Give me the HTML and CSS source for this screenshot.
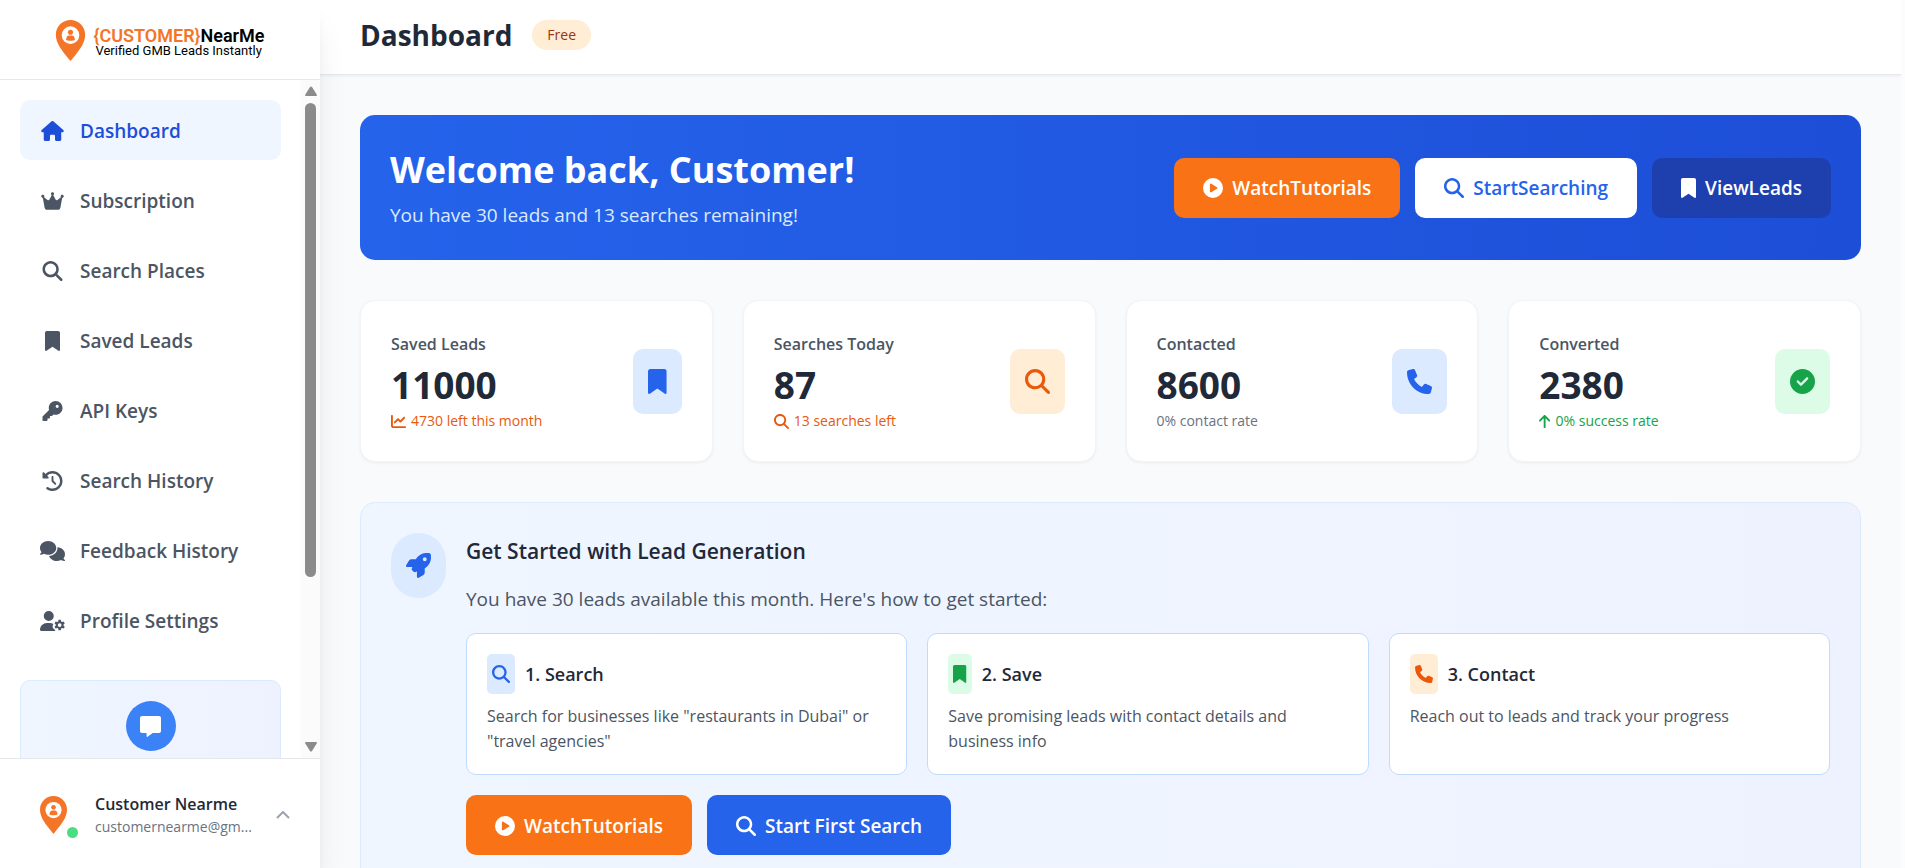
FILE: index.html
```html
<!DOCTYPE html>
<html lang="en">
<head>
    <meta charset="UTF-8">
    <meta name="viewport" content="width=device-width, initial-scale=1.0">
    <title>CustomerNearMe - Dashboard</title>
    <link rel="stylesheet" href="styles.css">
</head>
<body>
    <svg class="sprite" aria-hidden="true">
        <symbol id="i-house" viewBox="0 0 576 512"><path d="M575.8 255.500c0 18-15 32.100-32 32.100h-32l.7 160.200c0 2.700-.2 5.400-.5 8.100V472c0 22.100-17.900 40-40 40H392c-22.100 0-40-17.900-40-40v-88c0-17.700-14.300-32-32-32h-64c-17.700 0-32 14.300-32 32v88c0 22.100-17.900 40-40 40h-80c-22.100 0-40-17.900-40-40V287.600H32c-18 0-32-14-32-32.100 0-9 3-17 10-24L266.400 8c7-7 15-8 22-8s15 2 21 7l255.400 224.500c8 7 12 15 11 24z"/></symbol>
        <symbol id="i-crown" viewBox="0 0 576 512"><path d="M309 106c11.400-7 19-19.700 19-34 0-22.100-17.900-40-40-40s-40 17.900-40 40c0 14.400 7.600 27 19 34l-57.300 114.600c-9.100 18.200-32.700 23.400-48.600 10.700L72 160c5-6.700 8-15 8-24 0-22.100-17.900-40-40-40S0 113.900 0 136s17.900 40 40 40h.7l45.700 251.400C91.900 457.800 118.400 480 149.400 480h277.200c30.900 0 57.400-22.100 63-52.600L535.300 176h.7c22.100 0 40-17.900 40-40s-17.900-40-40-40-40 17.900-40 40c0 9 3 17.300 8 24l-89.100 71.300c-15.900 12.700-39.500 7.500-48.600-10.700z"/></symbol>
        <symbol id="i-search" viewBox="0 0 512 512"><path d="M416 208c0 45.900-14.900 88.300-40 122.700l126.600 126.700c12.500 12.500 12.500 32.800 0 45.300s-32.800 12.500-45.300 0L330.700 376C296.300 401.200 253.900 416 208 416 93.100 416 0 322.900 0 208S93.100 0 208 0s208 93.100 208 208zM208 352a144 144 0 1 0 0-288 144 144 0 1 0 0 288z"/></symbol>
        <symbol id="i-bookmark" viewBox="0 0 384 512"><path d="M0 48v439.700C0 501.100 10.900 512 24.300 512c5 0 9.900-1.500 14-4.400L192 400l153.700 107.600c4.100 2.900 9 4.400 14 4.400 13.400 0 24.300-10.900 24.300-24.300V48c0-26.500-21.500-48-48-48H48C21.500 0 0 21.500 0 48z"/></symbol>
        <symbol id="i-key" viewBox="0 0 512 512"><path d="M336 352c97.200 0 176-78.800 176-176S433.200 0 336 0 160 78.800 160 176c0 18.700 2.900 36.800 8.300 53.700L7 391c-4.500 4.500-7 10.600-7 17v80c0 13.300 10.700 24 24 24h80c13.300 0 24-10.700 24-24v-40h40c13.300 0 24-10.700 24-24v-40h40c6.400 0 12.500-2.500 17-7l33.300-33.300c16.900 5.400 35 8.300 53.700 8.300zm40-256a40 40 0 1 1 0 80 40 40 0 1 1 0-80z"/></symbol>
        <symbol id="i-history" viewBox="0 0 512 512"><path d="M75 75 41 41C25.900 25.900 0 36.600 0 57.900V168c0 13.300 10.700 24 24 24h110.100c21.400 0 32.100-25.900 17-41l-30.800-30.800C155 85.500 203 64 256 64c106 0 192 86 192 192s-86 192-192 192c-40.800 0-78.600-12.700-109.700-34.400-14.500-10.100-34.400-6.600-44.600 7.900s-6.600 34.400 7.900 44.600C151.200 495 201.700 512 256 512c141.400 0 256-114.600 256-256S397.400 0 256 0C185.300 0 121.300 28.700 75 75zm181 53c-13.300 0-24 10.700-24 24v104c0 6.400 2.500 12.500 7 17l72 72c9.400 9.400 24.600 9.400 33.900 0s9.400-24.600 0-33.900l-65-65V152c0-13.300-10.700-24-24-24z"/></symbol>
        <symbol id="i-comments" viewBox="0 0 640 512"><path d="M208 352c114.900 0 208-78.800 208-176S322.900 0 208 0 0 78.800 0 176c0 38.600 14.700 74.300 39.600 103.400-3.500 9.400-8.700 17.700-14.200 24.700-4.800 6.200-9.700 11-13.300 14.300C5.900 324 0 330 0 336c0 9 7 16 16 16 21.800 0 43.800-5.600 62.100-12.500 9.200-3.500 17.800-7.400 25.200-11.400C134.100 343.300 169.800 352 208 352zm240-176c0 112.300-99.100 196.900-216.500 207C255.800 457.400 336.400 512 432 512c38.200 0 73.900-8.700 104.700-23.900 7.500 4 16 7.900 25.200 11.400 18.300 6.900 40.300 12.500 62.100 12.500 9 0 16-7 16-16 0-6-4-11-12-17.600-3.600-3.300-8.500-8.100-13.300-14.300-5.500-7-10.700-15.400-14.200-24.700C625.300 410.300 640 374.600 640 336c0-92.900-85-168.900-192.700-175.500.5 5.100.7 10.300.7 15.500z"/></symbol>
        <symbol id="i-user-cog" viewBox="0 0 640 512"><path d="M224 256a128 128 0 1 0 0-256 128 128 0 1 0 0 256zm-45.700 48C79.800 304 0 383.800 0 482.300 0 498.700 13.300 512 29.700 512h362.500c-8-9-11-20-8-32-24-10-42-28-54-52-13-30-6-66 14-94-27-20-61-30-98.500-30z"/><path fill-rule="evenodd" d="m474 225-9 41c-8 3-16 8-23 13l-40-13c-13 15-23 32-29 51l31 28c-1 9-1 18 0 27l-31 28c6 19 16 36 29 51l40-13c7 5 15 10 23 13l9 41c19 4 39 4 58 0l9-41c8-3 16-8 23-13l40 13c13-15 23-32 29-51l-31-28c1-9 1-18 0-27l31-28c-6-19-16-36-29-51l-40 13c-7-5-15-10-23-13l-9-41c-19-4-39-4-58 0zm29 86a48 48 0 1 1 0 96 48 48 0 1 1 0-96z"/></symbol>
        <symbol id="i-message" viewBox="0 0 512 512"><path d="M48 0C21.500 0 0 21.500 0 48v320c0 26.500 21.500 48 48 48h112v80c0 6.100 3.400 11.600 8.800 14.300s11.900 2.100 16.800-1.500L309.300 416H464c26.500 0 48-21.500 48-48V48c0-26.500-21.500-48-48-48z"/></symbol>
        <symbol id="i-play" viewBox="0 0 512 512"><path d="M0 256a256 256 0 1 1 512 0 256 256 0 1 1-512 0zm188.300-108.900c-7.600 4.200-12.300 12.300-12.300 20.900v176c0 8.700 4.700 16.700 12.300 20.900s16.800 4.100 24.300-.5l144-88c7.100-4.400 11.500-12.100 11.500-20.500s-4.400-16.100-11.500-20.500l-144-88c-7.400-4.500-16.700-4.700-24.300-.5z"/></symbol>
        <symbol id="i-phone" viewBox="0 0 512 512"><path d="M164.900 24.600c-7.700-18.600-28-28.500-47.400-23.200l-88 24C12.100 30.200 0 46 0 64c0 247.400 200.600 448 448 448 18 0 33.800-12.100 38.600-29.500l24-88c5.300-19.400-4.600-39.700-23.200-47.400l-96-40c-16.300-6.800-35.200-2.100-46.300 11.600L304.700 368C234.300 334.700 177.300 277.700 144 207.300l49.300-40.300c13.700-11.200 18.400-30 11.600-46.300z"/></symbol>
        <symbol id="i-check" viewBox="0 0 512 512"><path d="M256 512a256 256 0 1 0 0-512 256 256 0 1 0 0 512zm113-303L241 337c-9.400 9.400-24.600 9.400-33.900 0l-64-64c-9.400-9.400-9.400-24.600 0-33.900s24.600-9.400 33.900 0l47 47 111-111c9.400-9.400 24.600-9.400 33.900 0s9.400 24.600 0 33.900z"/></symbol>
        <symbol id="i-chart" viewBox="0 0 512 512"><path d="M64 64c0-17.700-14.300-32-32-32S0 46.300 0 64v336c0 44.200 35.800 80 80 80h400c17.700 0 32-14.300 32-32s-14.300-32-32-32H80c-8.800 0-16-7.200-16-16zm406.600 86.600c12.500-12.500 12.500-32.800 0-45.300s-32.800-12.500-45.300 0L320 210.700l-57.400-57.300c-12.500-12.500-32.800-12.500-45.300 0l-112 112c-12.500 12.500-12.500 32.800 0 45.300s32.800 12.500 45.300 0l89.400-89.400 57.400 57.300c12.500 12.500 32.800 12.500 45.300 0z"/></symbol>
        <symbol id="i-up" viewBox="0 0 384 512"><path d="M214.600 41.400c-12.500-12.500-32.800-12.500-45.300 0l-160 160c-12.500 12.500-12.500 32.800 0 45.300s32.800 12.500 45.300 0L160 141.300V448c0 17.700 14.300 32 32 32s32-14.300 32-32V141.300l105.400 105.300c12.500 12.500 32.800 12.500 45.300 0s12.500-32.800 0-45.300z"/></symbol>
        <symbol id="i-rocket" viewBox="0 0 512 512"><path d="M156.600 384.900 125.700 354c-8.500-8.500-11.500-20.800-7.700-32.200 3-8.900 7-20.500 11.800-33.800H24c-8.600 0-16.600-4.600-20.900-12.100s-4.200-16.700.2-24.100l52.500-88.500c13-21.900 36.500-35.300 61.900-35.300h82.300c2.400-4 4.800-7.700 7.200-11.300C289.100-4.100 411.100-8.100 483.900 5.300c11.600 2.100 20.600 11.200 22.800 22.800 13.400 72.900 9.300 194.800-111.400 276.700-3.500 2.400-7.300 4.800-11.300 7.200v82.300c0 25.400-13.400 49-35.300 61.900l-88.500 52.500c-7.400 4.400-16.600 4.500-24.100.2S224 496.600 224 488V380.800c-14.100 4.900-26.400 8.900-35.700 11.900-11.200 3.600-23.400.5-31.800-7.800zM384 168a40 40 0 1 0 0-80 40 40 0 1 0 0 80z"/></symbol>
        <symbol id="i-pin" viewBox="0 0 30 42"><path fill="#f47528" d="M15 0C6.700 0 0 6.700 0 15c0 9 6 16 15 27 9-11 15-18 15-27C30 6.700 23.300 0 15 0z"/><circle cx="15" cy="15.500" r="9" fill="#fff"/><circle cx="15" cy="12.500" r="2.600" fill="#f47528"/><path fill="#f47528" d="M10.500 20.500c0-3 1.500-4.500 3-4.500h3c1.500 0 3 1.500 3 4.500-1 1-8 1-9 0z"/></symbol>
        <symbol id="i-chevron" viewBox="0 0 14 8"><path d="m1 7 6-6 6 6" fill="none" stroke="#9ca3af" stroke-width="2"/></symbol>
    </svg>

    <div class="layout">
        <aside class="sidebar">
            <a href="#" class="logo">
                <svg class="logo-pin"><use href="#i-pin"/></svg>
                <span class="logo-text">
                    <span class="logo-name"><span class="orange">{CUSTOMER}</span>NearMe</span>
                    <span class="logo-tag">Verified GMB Leads Instantly</span>
                </span>
            </a>

            <div class="sidebar-scroll">
                <nav class="nav">
                    <a href="#" class="nav-item active"><svg class="nav-icon"><use href="#i-house"/></svg>Dashboard</a>
                    <a href="#" class="nav-item"><svg class="nav-icon"><use href="#i-crown"/></svg>Subscription</a>
                    <a href="#" class="nav-item"><svg class="nav-icon"><use href="#i-search"/></svg>Search Places</a>
                    <a href="#" class="nav-item"><svg class="nav-icon"><use href="#i-bookmark"/></svg>Saved Leads</a>
                    <a href="#" class="nav-item"><svg class="nav-icon"><use href="#i-key"/></svg>API Keys</a>
                    <a href="#" class="nav-item"><svg class="nav-icon"><use href="#i-history"/></svg>Search History</a>
                    <a href="#" class="nav-item"><svg class="nav-icon"><use href="#i-comments"/></svg>Feedback History</a>
                    <a href="#" class="nav-item"><svg class="nav-icon"><use href="#i-user-cog"/></svg>Profile Settings</a>
                    <div class="help-card">
                        <span class="help-icon"><svg><use href="#i-message"/></svg></span>
                    </div>
                </nav>
                <div class="scrollbar" aria-hidden="true">
                    <svg class="scroll-arrow" viewBox="0 0 14 12"><path d="M6 2q1-1 2 0l5 8q0 1-1 1H2q-1 0-1-1z"/></svg>
                    <div class="scroll-track"><div class="scroll-thumb"></div></div>
                    <svg class="scroll-arrow" viewBox="0 0 14 12"><path d="M6 10q1 1 2 0l5-8q0-1-1-1H2Q1 1 1 2z"/></svg>
                </div>
            </div>

            <button class="profile">
                <span class="avatar"><svg><use href="#i-pin"/></svg><span class="online"></span></span>
                <span class="profile-info">
                    <span class="profile-name">Customer Nearme</span>
                    <span class="profile-email">customernearme@gm...</span>
                </span>
                <svg class="chevron"><use href="#i-chevron"/></svg>
            </button>
        </aside>

        <main class="main">
            <header class="header">
                <h1>Dashboard</h1>
                <span class="plan">Free</span>
            </header>

            <div class="content">
                <section class="banner">
                    <div>
                        <h2>Welcome back, Customer!</h2>
                        <p>You have 30 leads and 13 searches remaining!</p>
                    </div>
                    <div class="actions">
                        <button class="btn btn-orange"><svg class="icon"><use href="#i-play"/></svg>WatchTutorials</button>
                        <button class="btn btn-white"><svg class="icon"><use href="#i-search"/></svg>StartSearching</button>
                        <button class="btn btn-navy"><svg class="icon narrow"><use href="#i-bookmark"/></svg>ViewLeads</button>
                    </div>
                </section>

                <section class="stats">
                    <div class="stat">
                        <div>
                            <p class="stat-label">Saved Leads</p>
                            <p class="stat-value">11000</p>
                            <p class="stat-note text-orange"><svg class="icon"><use href="#i-chart"/></svg>4730 left this month</p>
                        </div>
                        <span class="stat-icon blue"><svg class="icon narrow"><use href="#i-bookmark"/></svg></span>
                    </div>
                    <div class="stat">
                        <div>
                            <p class="stat-label">Searches Today</p>
                            <p class="stat-value">87</p>
                            <p class="stat-note text-orange"><svg class="icon"><use href="#i-search"/></svg>13 searches left</p>
                        </div>
                        <span class="stat-icon amber"><svg class="icon"><use href="#i-search"/></svg></span>
                    </div>
                    <div class="stat">
                        <div>
                            <p class="stat-label">Contacted</p>
                            <p class="stat-value">8600</p>
                            <p class="stat-note">0% contact rate</p>
                        </div>
                        <span class="stat-icon blue"><svg class="icon"><use href="#i-phone"/></svg></span>
                    </div>
                    <div class="stat">
                        <div>
                            <p class="stat-label">Converted</p>
                            <p class="stat-value">2380</p>
                            <p class="stat-note text-green"><svg class="icon narrow"><use href="#i-up"/></svg>0% success rate</p>
                        </div>
                        <span class="stat-icon green"><svg class="icon"><use href="#i-check"/></svg></span>
                    </div>
                </section>

                <section class="started">
                    <span class="stat-icon round blue"><svg class="icon"><use href="#i-rocket"/></svg></span>
                    <div class="started-body">
                        <h3>Get Started with Lead Generation</h3>
                        <p class="started-intro">You have 30 leads available this month. Here's how to get started:</p>
                        <div class="steps">
                            <div class="step">
                                <h4><span class="step-icon blue"><svg class="icon"><use href="#i-search"/></svg></span>1. Search</h4>
                                <p>Search for businesses like "restaurants in Dubai" or "travel agencies"</p>
                            </div>
                            <div class="step">
                                <h4><span class="step-icon green"><svg class="icon narrow"><use href="#i-bookmark"/></svg></span>2. Save</h4>
                                <p>Save promising leads with contact details and business info</p>
                            </div>
                            <div class="step">
                                <h4><span class="step-icon amber"><svg class="icon"><use href="#i-phone"/></svg></span>3. Contact</h4>
                                <p>Reach out to leads and track your progress</p>
                            </div>
                        </div>
                        <div class="actions">
                            <button class="btn btn-orange"><svg class="icon"><use href="#i-play"/></svg>WatchTutorials</button>
                            <button class="btn btn-blue"><svg class="icon"><use href="#i-search"/></svg>Start First Search</button>
                        </div>
                    </div>
                </section>
            </div>
        </main>
    </div>
</body>
</html>
```
FILE: styles.css
```css
* {
    box-sizing: border-box;
    margin: 0;
    padding: 0;
}
body {
    font-family: 'Segoe UI', 'Open Sans', 'Noto Sans', sans-serif;
    font-size: 19px;
    line-height: 30px;
    color: #1f2937;
    background: #f9fafb;
}
a {
    color: inherit;
    text-decoration: none;
}
button {
    font: inherit;
    color: inherit;
    border: none;
    cursor: pointer;
}
svg {
    display: block;
    fill: currentColor;
}
.sprite {
    display: none;
}
.icon {
    width: 1em;
    height: 1em;
    flex: none;
}
.icon.narrow {
    width: 0.75em;
}
.layout {
    display: flex;
    height: 100vh;
    overflow: hidden;
    border-right: 4px solid #fcfcfc;
}

/* Sidebar */
.sidebar {
    display: flex;
    flex-direction: column;
    width: 320px;
    flex: none;
    background: #fff;
    box-shadow: 0 25px 31px -6px rgba(0, 0, 0, 0.1), 0 10px 12px -7px rgba(0, 0, 0, 0.1);
    z-index: 1;
}
.logo {
    display: flex;
    justify-content: center;
    gap: 7px;
    height: 80px;
    padding-top: 20px;
    border-bottom: 1px solid #e5e7eb;
    flex: none;
}
.logo-pin {
    width: 31px;
    height: 41px;
}
.logo-text {
    display: flex;
    flex-direction: column;
    padding-top: 7px;
    font-family: Roboto, sans-serif;
    color: #000;
}
.logo-name {
    font-size: 18px;
    font-weight: 600;
    line-height: 18px;
}
.orange {
    color: #f47528;
}
.logo-tag {
    font-size: 13px;
    line-height: 12px;
    padding-left: 2px;
}
.sidebar-scroll {
    display: flex;
    flex: 1;
    min-height: 0;
    overflow: hidden;
}
.nav {
    flex: 1;
    display: flex;
    flex-direction: column;
    gap: 10px;
    padding: 20px;
}
.nav-item {
    display: flex;
    align-items: center;
    gap: 15px;
    height: 60px;
    padding: 1px 20px 0;
    border-radius: 10px;
    font-weight: 600;
    color: #4b5563;
    flex: none;
}
.nav-item.active {
    background: #eff6ff;
    color: #1d4ed8;
}
.nav-icon {
    width: 25px;
    height: 20px;
}
.help-card {
    display: flex;
    justify-content: center;
    align-items: flex-start;
    height: 250px;
    margin-top: 20px;
    padding-top: 20px;
    background: linear-gradient(to right, #eff6ff, #eef2ff);
    border: 1px solid #dbeafe;
    border-radius: 10px;
    flex: none;
}
.help-icon {
    display: flex;
    align-items: center;
    justify-content: center;
    width: 50px;
    height: 50px;
    border-radius: 50%;
    background: #3b82f6;
    color: #fff;
}
.help-icon svg {
    width: 21px;
    height: 21px;
}
.scrollbar {
    display: flex;
    flex-direction: column;
    align-items: center;
    width: 19px;
    padding: 5px 0;
    background: #fbfbfb;
    color: #8b8b8b;
}
.scroll-arrow {
    width: 14px;
    height: 12px;
}
.scroll-track {
    flex: 1;
    padding: 6px 0;
}
.scroll-thumb {
    width: 11px;
    height: 75%;
    border-radius: 6px;
    background: #8b8b8b;
}
.profile {
    display: flex;
    align-items: center;
    height: 110px;
    padding: 2px 30px 0 40px;
    border-top: 1px solid #e5e7eb;
    background: #fff;
    text-align: left;
    flex: none;
}
.avatar {
    position: relative;
    width: 40px;
    margin-right: 15px;
}
.avatar svg {
    width: 27px;
    height: 38px;
}
.online {
    position: absolute;
    right: 2px;
    bottom: -4px;
    width: 11px;
    height: 11px;
    border-radius: 50%;
    background: #4ade80;
}
.profile-info {
    flex: 1;
    min-width: 0;
}
.profile-name {
    display: block;
    font-size: 16px;
    font-weight: 600;
    line-height: 25px;
}
.profile-email {
    display: block;
    font-size: 14px;
    line-height: 20px;
    color: #6b7280;
    white-space: nowrap;
}
.chevron {
    width: 14px;
    height: 8px;
}

/* Main area */
.main {
    flex: 1;
    min-width: 0;
}
.header {
    display: flex;
    align-items: center;
    gap: 20px;
    height: 75px;
    padding: 0 40px 5px;
    background: #fff;
    border-bottom: 1px solid #e5e7eb;
    box-shadow: 0 1px 3px rgba(0, 0, 0, 0.06);
}
.header h1 {
    font-size: 28px;
    line-height: 40px;
}
.plan {
    padding: 5px 15px;
    border-radius: 15px;
    background: #ffedd5;
    color: #9a3412;
    font-size: 14px;
    font-weight: 500;
    line-height: 20px;
}
.content {
    padding: 40px;
}
.banner {
    display: flex;
    align-items: center;
    justify-content: space-between;
    height: 145px;
    padding: 0 30px;
    border-radius: 15px;
    background: linear-gradient(to right, #2563eb, #1d4ed8);
    color: #fff;
}
.banner h2 {
    font-size: 36px;
    line-height: 50px;
    margin-bottom: 5px;
}
.banner p {
    color: #dbeafe;
}
.actions {
    display: flex;
    gap: 15px;
}
.btn {
    display: flex;
    align-items: center;
    gap: 9px;
    height: 60px;
    padding: 1px 29px 0;
    border-radius: 10px;
    font-weight: 600;
    color: #fff;
}
.btn .icon {
    font-size: 20px;
}
.btn-orange {
    background: #f97316;
}
.btn-white {
    background: #fff;
    color: #2563eb;
}
.btn-navy {
    background: #1e40af;
}
.btn-blue {
    background: #2563eb;
}

.stats {
    display: grid;
    grid-template-columns: repeat(4, 1fr);
    gap: 30px;
    margin: 40px 0;
}
.stat {
    display: flex;
    align-items: center;
    justify-content: space-between;
    padding: 30px;
    background: #fff;
    border: 1px solid #f3f4f6;
    border-radius: 15px;
    box-shadow: 0 1px 3px rgba(0, 0, 0, 0.06);
}
.stat-label {
    font-size: 16px;
    font-weight: 600;
    line-height: 26px;
    color: #4b5563;
}
.stat-value {
    font-size: 37px;
    font-weight: 700;
    line-height: 45px;
    margin: 5px 0 4px;
}
.stat-note {
    display: flex;
    align-items: center;
    gap: 5px;
    font-size: 14px;
    line-height: 20px;
    color: #6b7280;
}
.stat-note .icon {
    font-size: 15px;
}
.text-orange {
    color: #ea580c;
}
.text-green {
    color: #16a34a;
}
.stat-icon {
    display: flex;
    align-items: center;
    height: 65px;
    padding: 0 15px;
    border-radius: 10px;
    font-size: 25px;
    flex: none;
}
.round {
    border-radius: 33px;
}
.blue {
    background: #dbeafe;
    color: #2563eb;
}
.amber {
    background: #ffedd5;
    color: #ea580c;
}
.green {
    background: #dcfce7;
    color: #16a34a;
}

.started {
    display: flex;
    align-items: flex-start;
    gap: 20px;
    padding: 30px;
    background: linear-gradient(to right, #eff6ff, #eef2ff);
    border: 1px solid #dbeafe;
    border-radius: 15px;
}
.started-body {
    flex: 1;
}
.started h3 {
    font-size: 21px;
    font-weight: 600;
    line-height: 36px;
    margin-bottom: 15px;
}
.started-intro {
    color: #4b5563;
    margin-bottom: 19px;
}
.steps {
    display: grid;
    grid-template-columns: repeat(3, 1fr);
    gap: 20px;
    margin-bottom: 20px;
}
.step {
    padding: 20px;
    background: #fff;
    border: 1px solid #bfdbfe;
    border-radius: 10px;
}
.step h4 {
    display: flex;
    align-items: center;
    gap: 10px;
    font-size: 18px;
    font-weight: 600;
    margin-bottom: 10px;
}
.step-icon {
    display: flex;
    align-items: center;
    height: 40px;
    padding: 0 5px;
    border-radius: 5px;
    font-size: 18px;
}
.step p {
    font-size: 16px;
    line-height: 25px;
    color: #4b5563;
}
```
